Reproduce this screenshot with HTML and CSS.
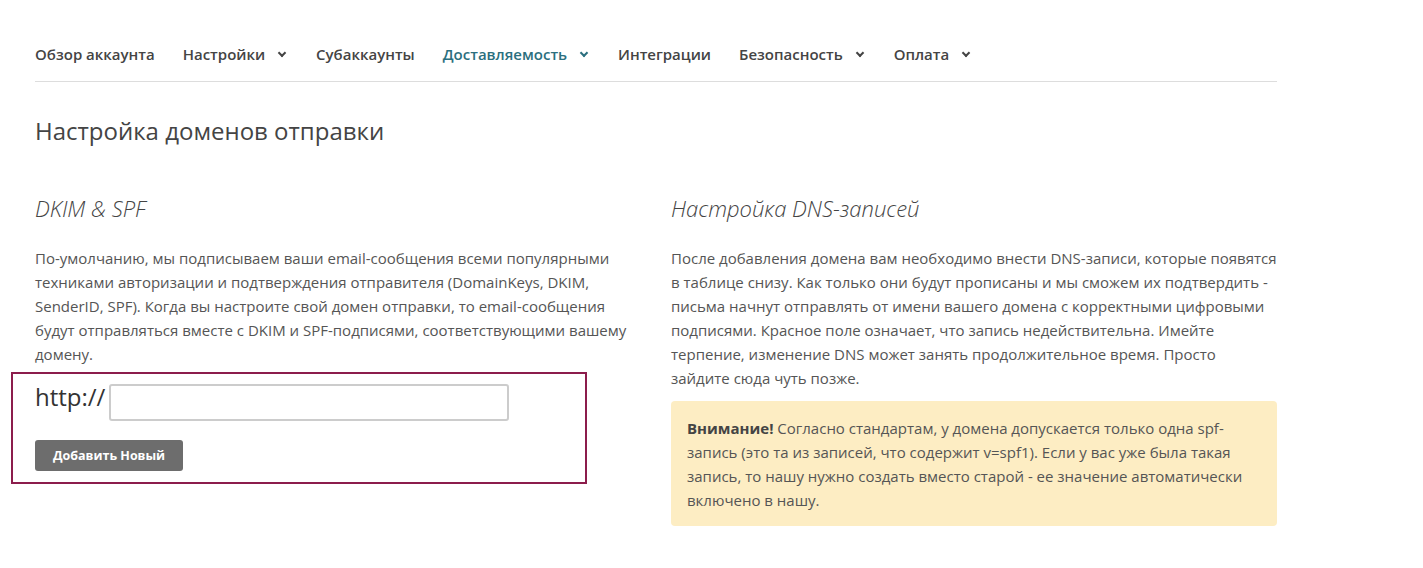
FILE: index.html
```html
<!doctype html>
<html lang="ru">
<head>
    <meta charset="utf-8">
    <meta name="viewport" content="width=device-width, initial-scale=1">
    <title>Настройка доменов отправки</title>
    <link rel="stylesheet" href="styles.css">
</head>
<body>

    <div class="container">
        <nav class="topnav">
            <a href="#" class="nav-link">Обзор аккаунта</a>
            <a href="#" class="nav-link">Настройки <span class="caret"></span></a>
            <a href="#" class="nav-link">Субаккаунты</a>
            <a href="#" class="nav-link active">Доставляемость <span class="caret"></span></a>
            <a href="#" class="nav-link">Интеграции</a>
            <a href="#" class="nav-link">Безопасность <span class="caret"></span></a>
            <a href="#" class="nav-link">Оплата <span class="caret"></span></a>
        </nav>

        <h1 class="page-title">Настройка доменов отправки</h1>

        <div class="row">
            <div class="col">
                <h3 class="section-title">DKIM &amp; SPF</h3>
                <p class="text">По-умолчанию, мы подписываем ваши email-сообщения всеми популярными техниками авторизации и подтверждения отправителя (DomainKeys, DKIM, SenderID, SPF). Когда вы настроите свой домен отправки, то email-сообщения будут отправляться вместе с DKIM и SPF-подписями, соответствующими вашему домену.</p>

                <form class="domain-form">
                    <div class="form-line">
                        <label for="domain" class="prefix">http://</label>
                        <input type="text" id="domain" class="form-control">
                    </div>
                    <button type="submit" class="btn">Добавить Новый</button>
                </form>
            </div>

            <div class="col">
                <h3 class="section-title">Настройка DNS-записей</h3>
                <p class="text">После добавления домена вам необходимо внести DNS-записи, которые появятся в таблице снизу. Как только они будут прописаны и мы сможем их подтвердить - письма начнут отправлять от имени вашего домена с корректными цифровыми подписями. Красное поле означает, что запись недействительна. Имейте терпение, изменение DNS может занять продолжительное время. Просто зайдите сюда чуть позже.</p>

                <div class="alert">
                    <b>Внимание!</b> Согласно стандартам, у домена допускается только одна spf-запись (это та из записей, что содержит v=spf1). Если у вас уже была такая запись, то нашу нужно создать вместо старой - ее значение автоматически включено в нашу.
                </div>
            </div>
        </div>
    </div>

</body>
</html>
```

FILE: styles.css
```css
body {
    font-family: "Open Sans", Arial, sans-serif;
    font-size: 15px;
    color: #555;
    background: #fff;
    margin: 0;
    padding: 0;
}

.container {
    width: 1242px;
    padding: 0 35px;
}

.topnav {
    display: flex;
    align-items: center;
    gap: 28px;
    height: 82px;
    padding-top: 26px;
    border-bottom: 1px solid #ddd;
    box-sizing: border-box;
}

.nav-link {
    color: #444;
    font-size: 15px;
    font-weight: 600;
    text-decoration: none;
}

.nav-link.active {
    color: #2b6f7e;
}

.caret {
    display: inline-block;
    width: 4px;
    height: 4px;
    margin-left: 10px;
    margin-right: 3px;
    border-right: 2px solid currentColor;
    border-bottom: 2px solid currentColor;
    transform: translateY(-4px) rotate(45deg);
}

.page-title {
    font-size: 24px;
    font-weight: 400;
    color: #444;
    margin: 32px 0 0;
}

.row {
    display: flex;
    gap: 30px;
    margin-top: 46px;
}

.col {
    flex: 1;
}

.section-title {
    font-size: 22px;
    font-weight: 300;
    font-style: italic;
    color: #444;
    margin: 0 0 23px;
}

.text {
    line-height: 24px;
    margin: 0 0 6px;
}

.domain-form {
    width: 576px;
    margin-left: -24px;
    padding: 8px 22px 11px 22px;
    border: 2px solid #8c1d4c;
    box-sizing: border-box;
}

.form-line {
    display: flex;
    align-items: flex-start;
    gap: 4px;
}

.prefix {
    font-size: 24px;
    color: #333;
    line-height: 30px;
}

.form-control {
    width: 400px;
    height: 37px;
    margin-top: 2px;
    border: 2px solid #ccc;
    border-radius: 3px;
    box-sizing: border-box;
}

.btn {
    margin-top: 19px;
    padding: 0 18px;
    height: 31px;
    background-color: #6d6d6d;
    border: none;
    border-radius: 3px;
    color: #fff;
    font-family: inherit;
    font-size: 12.5px;
    font-weight: 700;
    cursor: pointer;
}

.alert {
    background-color: #fdedc3;
    border-radius: 4px;
    padding: 15px 15px 14px 16px;
    line-height: 24px;
    margin-top: 11px;
}

.alert b {
    color: #444;
}
```
